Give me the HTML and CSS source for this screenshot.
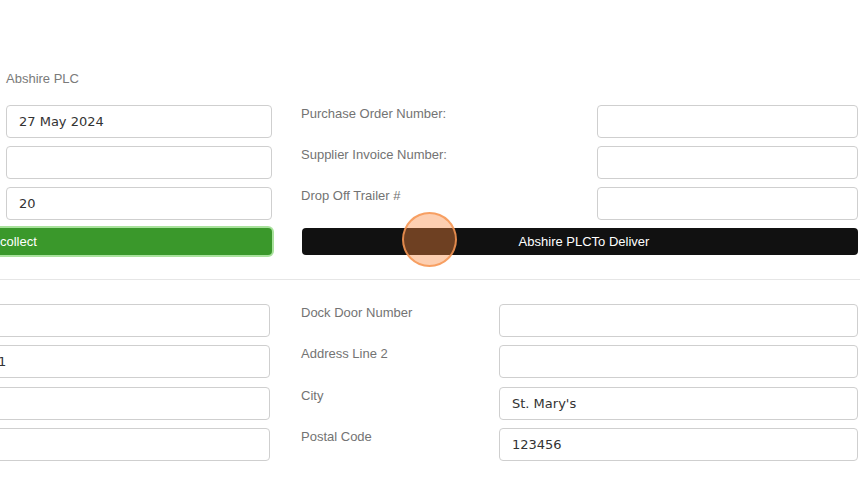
FILE: index.html
```html
<!DOCTYPE html>
<html lang="en">

<head>
  <meta charset="UTF-8">
  <title>Delivery details</title>
  <link rel="stylesheet" href="styles.css">
</head>

<body>
  <!-- order -->
  <div class="top">
    <div class="company">Abshire PLC</div>
    <input class="field" type="text" value="27 May 2024">
    <label class="label">Purchase Order Number:</label>
    <input class="field" type="text" value="">
    <input class="field" type="text" value="">
    <label class="label">Supplier Invoice Number:</label>
    <input class="field" type="text" value="">
    <input class="field" type="text" value="20">
    <label class="label">Drop Off Trailer #</label>
    <input class="field" type="text" value="">
    <button class="btn btn-green">collect</button>
    <button class="btn btn-dark">Abshire PLCTo Deliver</button>
  </div>

  <div class="sep"></div>

  <!-- address -->
  <div class="bottom">
    <input class="field" type="text" value="">
    <label class="label">Dock Door Number</label>
    <input class="field" type="text" value="">
    <input class="field" type="text" value="1">
    <label class="label">Address Line 2</label>
    <input class="field" type="text" value="">
    <input class="field" type="text" value="">
    <label class="label">City</label>
    <input class="field" type="text" value="St. Mary's">
    <input class="field" type="text" value="">
    <label class="label">Postal Code</label>
    <input class="field" type="text" value="123456">
  </div>

  <!-- click marker -->
  <div class="click"></div>
</body>

</html>
```

FILE: styles.css
```css
* {
  margin: 0;
  padding: 0;
  box-sizing: border-box;
}

html,
body {
  width: 860px;
  height: 481px;
  overflow: hidden;
  background: #fff;
}

body {
  position: relative;
  font-family: "Liberation Sans", Arial, sans-serif;
  font-size: 13px;
  color: #666;
}

.top {
  display: grid;
  grid-template-columns: 266px 267px 261px;
  column-gap: 29px;
  row-gap: 8px;
  padding: 70px 0 0 6px;
}

.company {
  grid-column: 1 / -1;
  line-height: 17px;
  margin-bottom: 10px;
  color: #7a7a7a;
}

.label {
  line-height: 17px;
  color: #737373;
  white-space: nowrap;
}

.field {
  width: 100%;
  height: 33px;
  padding: 0 12px;
  border: 1px solid #cfcfcf;
  border-radius: 4px;
  font-family: "DejaVu Sans", Verdana, sans-serif;
  font-size: 13px;
  color: #333;
  background: #fff;
  outline: none;
}

.btn {
  height: 27px;
  border: none;
  border-radius: 4px;
  font-family: "Liberation Sans", Arial, sans-serif;
  font-size: 13px;
  color: #fff;
  cursor: pointer;
}

.btn-green {
  margin-left: -20px;
  width: calc(100% + 20px);
  padding-left: 14px;
  text-align: left;
  background: #3a982b;
  box-shadow: 0 0 0 2px #a9e29d;
}

.btn-dark {
  grid-column: 2 / 4;
  margin-left: 1px;
  padding-left: 8px;
  background: #111;
}

.sep {
  height: 1px;
  margin-top: 24px;
  background: #e6e6e6;
}

.bottom {
  display: grid;
  grid-template-columns: 285px 167px 359px;
  column-gap: 31px;
  row-gap: 8.4px;
  margin-left: -15px;
  padding-top: 24px;
}

.click {
  position: absolute;
  left: 402px;
  top: 212px;
  width: 55px;
  height: 55px;
  border-radius: 50%;
  border: 2px solid rgba(246, 150, 85, 0.85);
  background: rgba(250, 135, 60, 0.4);
}
```
